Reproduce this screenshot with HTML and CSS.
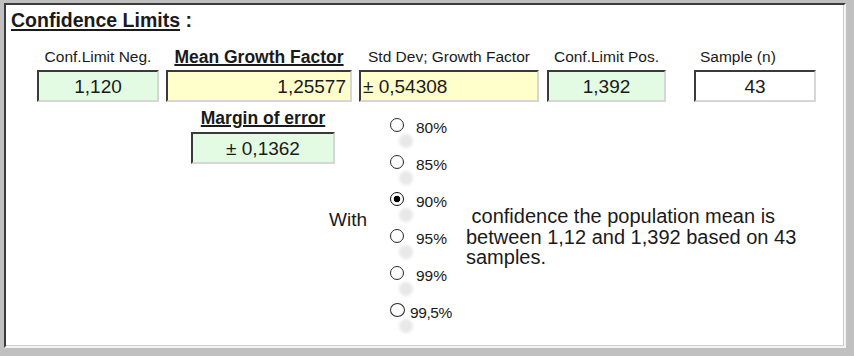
FILE: index.html
```html
<!DOCTYPE html>
<html lang="en">
<head>
    <meta charset="UTF-8">
    <title>Confidence Limits</title>
    <link rel="stylesheet" href="styles.css">
</head>
<body>
    <div class="panel">
        <h1 class="title"><u>Confidence Limits</u> :</h1>

        <div class="fields">
            <div class="field col-neg">
                <div class="field-label">Conf.Limit Neg.</div>
                <div class="box green center">1,120</div>
            </div>
            <div class="field col-mean">
                <div class="field-label strong">Mean Growth Factor</div>
                <div class="box yellow right">1,25577</div>
            </div>
            <div class="field col-std">
                <div class="field-label">Std Dev; Growth Factor</div>
                <div class="box yellow left">± 0,54308</div>
            </div>
            <div class="field col-pos">
                <div class="field-label">Conf.Limit Pos.</div>
                <div class="box green center">1,392</div>
            </div>
            <div class="field col-sample">
                <div class="field-label sample-label">Sample (n)</div>
                <div class="box white center">43</div>
            </div>
        </div>

        <div class="lower">
            <div class="lower-left">
                <div class="margin-block">
                    <div class="field-label strong">Margin of error</div>
                    <div class="box green center">± 0,1362</div>
                </div>
                <div class="with">With</div>
            </div>

            <div class="radios">
                <div class="radio-item"><span class="radio"></span><span class="radio-label">80%</span></div>
                <div class="radio-item"><span class="radio"></span><span class="radio-label">85%</span></div>
                <div class="radio-item"><span class="radio checked"></span><span class="radio-label">90%</span></div>
                <div class="radio-item"><span class="radio"></span><span class="radio-label">95%</span></div>
                <div class="radio-item"><span class="radio"></span><span class="radio-label">99%</span></div>
                <div class="radio-item last"><span class="radio"></span><span class="radio-label">99,5%</span></div>
            </div>

            <p class="sentence">&nbsp;confidence the population mean is between 1,12 and 1,392 based on 43 samples.</p>
        </div>
    </div>
</body>
</html>
```

FILE: styles.css
```css
body {
    margin: 0;
    background-color: #c0c0c0;
    font-family: "Liberation Sans", Arial, sans-serif;
    color: #1a1a1a;
}

.panel {
    box-sizing: border-box;
    width: 842px;
    height: 345px;
    margin: 3px 0 0 4px;
    padding: 4px 0 0 5px;
    background-color: #fff;
    border: 2px solid;
    border-color: #3c3c3c #f4f4f4 #f4f4f4 #3c3c3c;
    box-shadow: inset -1px -1px 0 #cdcdcd;
}

.title {
    margin: 0;
    font-size: 19.5px;
    line-height: 22px;
    font-weight: bold;
}

.title u {
    text-decoration-thickness: 1.5px;
    text-underline-offset: 2px;
}

/* top row of values */
.fields {
    display: flex;
    margin: 16.5px 0 0 26px;
}

.col-neg { width: 122px; }
.col-mean { width: 186px; margin-left: 7px; }
.col-std { width: 180px; margin-left: 7px; }
.col-pos { width: 119px; margin-left: 8px; }
.col-sample { width: 122px; margin-left: 28px; }

.field-label {
    font-size: 15.5px;
    line-height: 18px;
    text-align: center;
    white-space: nowrap;
}

.field-label.strong {
    font-size: 17.5px;
    line-height: 18px;
    font-weight: bold;
    text-decoration: underline;
    text-decoration-thickness: 1.5px;
}

.sample-label {
    text-align: left;
    padding-left: 6px;
}

.box {
    box-sizing: border-box;
    height: 32px;
    margin-top: 4px;
    padding: 1px 4px 0;
    font-size: 19px;
    line-height: 27px;
    border: 2px solid;
    border-color: #3a3a3a #d6d6d6 #d6d6d6 #3a3a3a;
    white-space: nowrap;
}

.green { background-color: #e2fbe2; }
.yellow { background-color: #ffffcc; }
.white { background-color: #fff; }

.center { text-align: center; }
.right { text-align: right; }
.left { text-align: left; padding-left: 2px; }

/* lower part */
.lower {
    display: flex;
    align-items: flex-start;
    margin: 5px 0 0 180px;
}

.lower-left {
    width: 199px;
}

.margin-block {
    width: 144px;
    padding-top: 2.5px;
}

.margin-block .box {
    margin-top: 5px;
}

.with {
    margin: 45px 0 0 138px;
    font-size: 19px;
    line-height: 22px;
}

.radios {
    width: 76px;
}

.radio-item {
    display: flex;
    align-items: flex-start;
    height: 37px;
}

.radio {
    position: relative;
    box-sizing: border-box;
    flex: none;
    width: 14px;
    height: 14px;
    margin-top: 11.5px;
    border: 1.6px solid #2b2b2b;
    border-radius: 50%;
    background: radial-gradient(circle at 40% 40%, #fff 0 50%, #e4e4e4 100%);
}

.radio::after {
    content: "";
    position: absolute;
    left: 8px;
    top: 15px;
    width: 14px;
    height: 14px;
    border-radius: 50%;
    background-color: #e8e8e8;
    filter: blur(1.5px);
}

.radio.checked {
    border-color: #111;
    background: radial-gradient(circle, #000 0 3px, #fff 3.6px);
}

.radio-label {
    margin: 12px 0 0 12px;
    font-size: 15.5px;
    line-height: 18px;
}

.last .radio {
    width: 15px;
}

.last .radio-label {
    margin-left: 5px;
    letter-spacing: -0.4px;
}

.sentence {
    width: 335px;
    margin: 99.5px 0 0;
    font-size: 20px;
    line-height: 20.5px;
}
```
